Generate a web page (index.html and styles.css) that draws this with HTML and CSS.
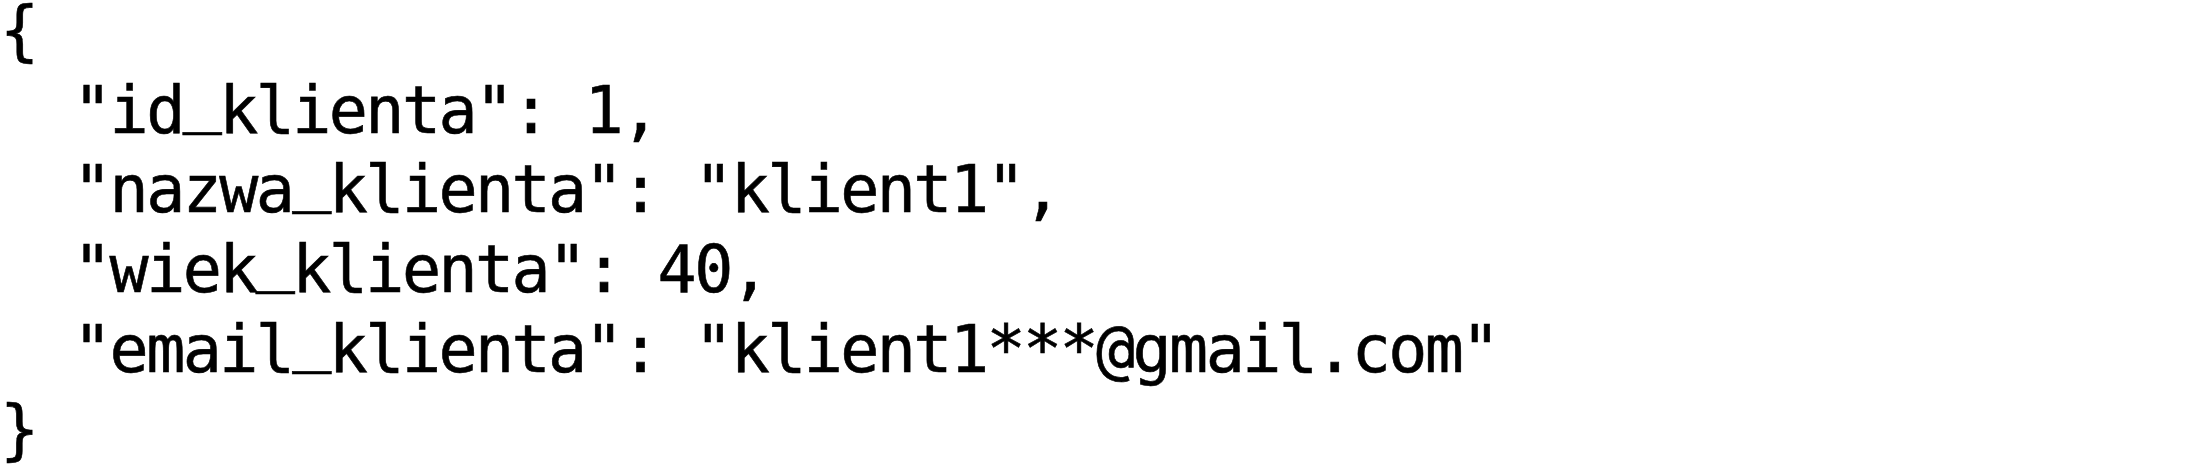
FILE: index.html
```html
<!DOCTYPE html>
<html lang="pl">
<head>
<meta charset="utf-8">
<title>JSON</title>
<link rel="stylesheet" href="styles.css">
</head>
<body>
<pre class="code">{
  "id<span class="u">_</span>klienta": 1,
  "nazwa<span class="u">_</span>klienta": "klient1",
  "wiek<span class="u">_</span>klienta": 40,
  "email<span class="u">_</span>klienta": "klient1***@gmail.com"
}</pre>
</body>
</html>
```
FILE: styles.css
```css
html, body {
  margin: 0;
  padding: 0;
  background: #ffffff;
}
.code {
  margin: -9px 0 0 0;
  padding: 0;
  font-family: "DejaVu Sans Mono", monospace;
  font-size: 65px;
  line-height: 79.7px;
  letter-spacing: -2.6px;
  color: #000000;
  -webkit-text-stroke: 0.6px #000000;
}
.u {
  vertical-align: 14px;
  line-height: 0;
}
```
